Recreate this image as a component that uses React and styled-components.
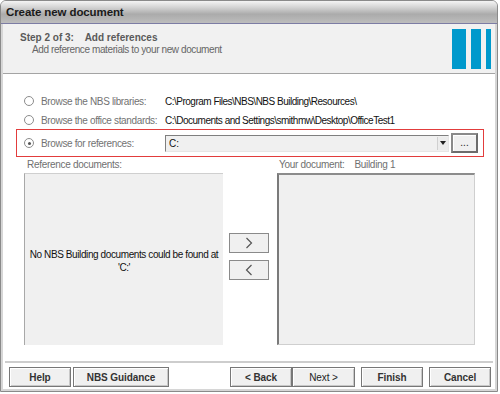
import React from 'react';
import styled, { createGlobalStyle } from 'styled-components';

const GlobalStyle = createGlobalStyle`
  html, body {
    margin: 0;
    padding: 0;
    background: #ffffff;
  }
  body {
    font-family: "Liberation Sans", Arial, sans-serif;
    font-size: 10px;
  }
`;

const Window = styled.div`
  width: 496px;
  height: 390px;
  border: 1px solid #8a8a8a;
  border-radius: 6px 6px 0 0;
  background: #ffffff;
  display: flex;
  flex-direction: column;
  overflow: hidden;
  box-shadow: inset 2px 0 0 #d6d6d6, inset -2px 0 0 #d6d6d6, inset 0 -2px 0 #d6d6d6;
`;

const TitleBar = styled.div`
  height: 22px;
  flex: none;
  display: flex;
  align-items: center;
  padding-left: 5px;
  background: linear-gradient(#f4f4f4 0%, #d2d2d2 30%, #ababab 60%, #bdbdbd 100%);
  border-bottom: 1px solid #7c7ca4;
  font-size: 11.5px;
  font-weight: bold;
  color: #1a1a1a;
  letter-spacing: -0.1px;
`;

const Header = styled.div`
  height: 49px;
  flex: none;
  display: flex;
  justify-content: space-between;
  background: #f1f1f1;
  border-bottom: 1px solid #a4a4a4;
  margin: 0 2px;
`;

const HeaderText = styled.div`
  padding: 8px 0 0 17px;
`;

const StepTitle = styled.div`
  font-weight: bold;
  font-size: 10px;
  color: #5a5a5a;
  white-space: pre;
`;

const StepSub = styled.div`
  padding: 1px 0 0 12px;
  color: #666666;
  font-size: 10px;
  letter-spacing: -0.4px;
`;

const Logo = styled.div`
  display: flex;
  gap: 5px;
  padding: 5px 4px 0 0;
`;

const LogoBar = styled.div`
  width: ${p => p.$w}px;
  height: 40px;
  background: #0099cc;
`;

const Body = styled.div`
  flex: 1;
  display: flex;
  flex-direction: column;
  padding: 17px 2px 0 2px;
`;

const Option = styled.div`
  display: grid;
  grid-template-columns: 17px 124px 1fr;
  align-items: center;
  height: ${p => p.$h}px;
  padding-left: 21px;
`;

const Highlight = styled.div`
  margin-left: 13px;
  width: 468px;
  height: 28px;
  border: 1px solid #e23c3c;
  box-sizing: border-box;
  display: grid;
  grid-template-columns: 17px 124px 286px 27px;
  align-items: center;
  padding-left: 7px;
`;

const Radio = styled.span`
  width: 8px;
  height: 8px;
  border: 1px solid #8c8c8c;
  border-radius: 50%;
  background: #ffffff;
  display: flex;
  align-items: center;
  justify-content: center;
  &::after {
    content: '';
    display: ${p => (p.$on ? 'block' : 'none')};
    width: 3px;
    height: 3px;
    border-radius: 50%;
    background: #555555;
  }
`;

const OptionLabel = styled.span`
  color: #727272;
  font-size: 10px;
  letter-spacing: -0.35px;
  white-space: nowrap;
`;

const PathText = styled.span`
  color: #111111;
  font-size: 10px;
  letter-spacing: -0.5px;
  white-space: nowrap;
`;

const Combo = styled.div`
  height: 17px;
  border: 1px solid #7f7f7f;
  border-right-color: #e6e6e6;
  border-bottom-color: #e6e6e6;
  background: #f0f0f0;
  display: flex;
  align-items: center;
  box-sizing: border-box;
  margin-right: 2px;
`;

const ComboValue = styled.span`
  flex: 1;
  padding-left: 3px;
  font-size: 10px;
  color: #111111;
`;

const ComboArrow = styled.span`
  width: 10px;
  height: 13px;
  background: #ececec;
  border-left: 1px solid #d0d0d0;
  display: flex;
  align-items: center;
  justify-content: center;
  &::after {
    content: '';
    border-left: 3px solid transparent;
    border-right: 3px solid transparent;
    border-top: 4px solid #222222;
  }
`;

const BrowseButton = styled.button`
  height: 20px;
  width: 27px;
  padding: 0;
  border: 2px solid #6c6c6c;
  border-top-color: #8a8a8a;
  border-left-color: #8a8a8a;
  background: #f0f0f0;
  box-shadow: inset 1px 1px 0 #ffffff;
  font-family: inherit;
  font-size: 10px;
  color: #222222;
  line-height: 10px;
`;

const Lists = styled.div`
  display: grid;
  grid-template-columns: 199px 54px 198px;
  grid-template-rows: 16px 172px;
  padding-left: 21px;
`;

const ListLabel = styled.div`
  font-size: 10px;
  color: #707070;
  letter-spacing: -0.3px;
  padding: 2px 0 0 ${p => p.$pad || 3}px;
  white-space: pre;
`;

const ListBox = styled.div`
  background: #f0f0f0;
  box-sizing: border-box;
  display: flex;
  flex-direction: column;
  align-items: center;
  justify-content: center;
  text-align: center;
  font-size: 10px;
  letter-spacing: -0.4px;
  color: #111111;
  line-height: 13px;
  white-space: nowrap;
  padding-top: 2px;
  ${p => p.$sunken
    ? 'border: 1px solid #cfcfcf; border-top: 2px solid #8c8c8c; border-left: 2px solid #7a7a7a;'
    : 'border-top: 1px solid #cfcfcf; border-left: 1px solid #a8a8a8;'}
`;

const MoveButtons = styled.div`
  display: flex;
  flex-direction: column;
  gap: 7px;
  padding: 60px 0 0 6px;
`;

const MoveButton = styled.button`
  width: 40px;
  height: 20px;
  padding: 0;
  border: 1px solid #8a8a8a;
  background: #f0f0f0;
  display: flex;
  align-items: center;
  justify-content: center;
`;

const Separator = styled.div`
  height: 2px;
  margin: 16px 2px 0;
  background: #cdcdcd;
`;

const Footer = styled.div`
  display: flex;
  align-items: flex-start;
  padding: 4px 0 0 6px;
  flex: none;
`;

const FooterGroup = styled.div`
  display: flex;
  gap: ${p => p.$gap || 0}px;
  margin-left: ${p => p.$ml || 0}px;
`;

const FooterButton = styled.button`
  width: ${p => p.$w}px;
  height: 20px;
  padding: 0;
  border: 1px solid #777777;
  background: #f0f0f0;
  box-shadow: inset 1px 1px 0 #ffffff, inset -1px -1px 0 #c8c8c8;
  font-family: inherit;
  font-size: 10px;
  letter-spacing: -0.1px;
  font-weight: ${p => (p.$light ? 'normal' : 'bold')};
  color: ${p => (p.$light ? '#222222' : '#333333')};
`;

const Chevron = ({ dir }) => (
  <svg width="8" height="12" viewBox="0 0 8 12">
    <polyline
      points={dir === 'right' ? '1.5,1 6.5,6 1.5,11' : '6.5,1 1.5,6 6.5,11'}
      fill="none"
      stroke="#555"
      strokeWidth="1.2"
    />
  </svg>
);

const App = () => {
  return (
    <>
      <GlobalStyle />
      <Window>
        <TitleBar>Create new document</TitleBar>
        <Header>
          <HeaderText>
            <StepTitle>Step 2 of 3:    Add references</StepTitle>
            <StepSub>Add reference materials to your new document</StepSub>
          </HeaderText>
          <Logo>
            <LogoBar $w={14} />
            <LogoBar $w={10} />
            <LogoBar $w={5} />
          </Logo>
        </Header>
        <Body>
          <Option $h={20}>
            <Radio />
            <OptionLabel>Browse the NBS libraries:</OptionLabel>
            <PathText>C:\Program Files\NBS\NBS Building\Resources\</PathText>
          </Option>
          <Option $h={18}>
            <Radio />
            <OptionLabel>Browse the office standards:</OptionLabel>
            <PathText>C:\Documents and Settings\smithmw\Desktop\OfficeTest1</PathText>
          </Option>
          <Highlight>
            <Radio $on />
            <OptionLabel>Browse for references:</OptionLabel>
            <Combo>
              <ComboValue>C:</ComboValue>
              <ComboArrow />
            </Combo>
            <BrowseButton>...</BrowseButton>
          </Highlight>
          <Lists>
            <ListLabel>Reference documents:</ListLabel>
            <div />
            <ListLabel $pad={2}>Your document:    Building 1</ListLabel>
            <ListBox>
              <span>No NBS Building documents could be found at</span>
              <span>'C:'</span>
            </ListBox>
            <MoveButtons>
              <MoveButton><Chevron dir="right" /></MoveButton>
              <MoveButton><Chevron dir="left" /></MoveButton>
            </MoveButtons>
            <ListBox $sunken />
          </Lists>
          <Separator />
          <Footer>
            <FooterGroup $gap={2}>
              <FooterButton $w={62}>Help</FooterButton>
              <FooterButton $w={96}>NBS Guidance</FooterButton>
            </FooterGroup>
            <FooterGroup $ml={61}>
              <FooterButton $w={62}>&lt; Back</FooterButton>
              <FooterButton $w={63} $light>Next &gt;</FooterButton>
            </FooterGroup>
            <FooterGroup $gap={6} $ml={6}>
              <FooterButton $w={62}>Finish</FooterButton>
              <FooterButton $w={62}>Cancel</FooterButton>
            </FooterGroup>
          </Footer>
        </Body>
      </Window>
    </>
  );
};

export default App;
